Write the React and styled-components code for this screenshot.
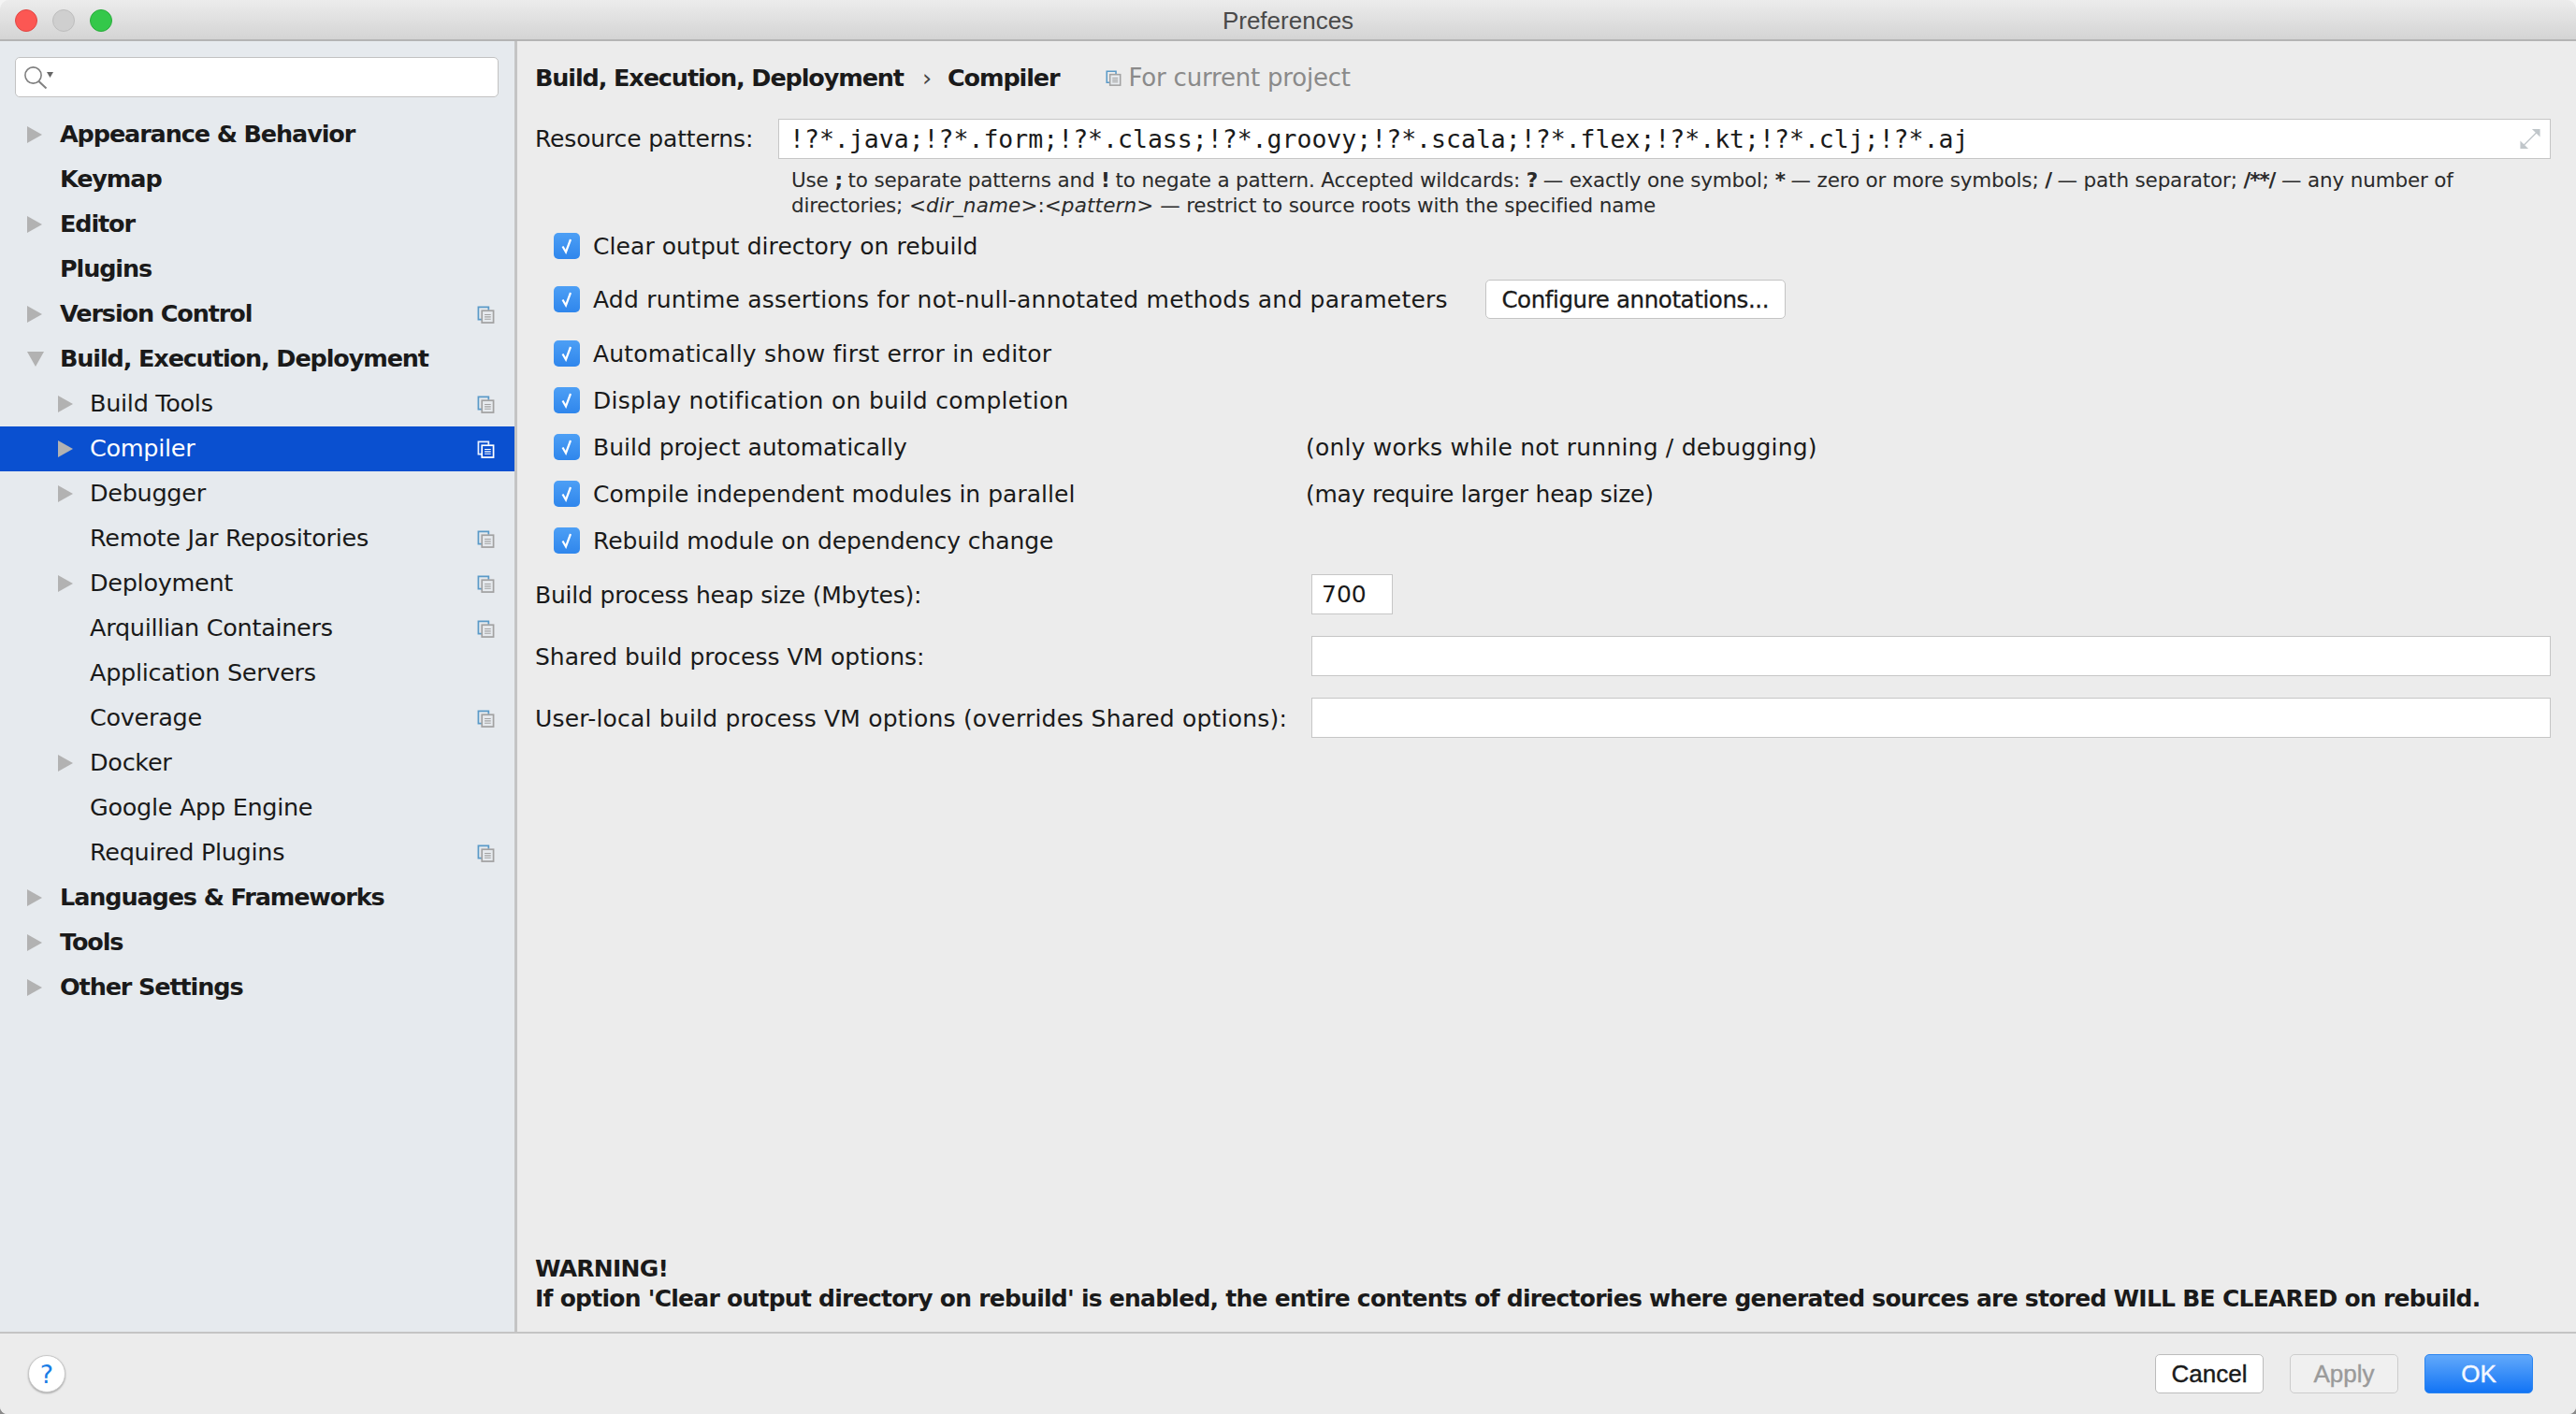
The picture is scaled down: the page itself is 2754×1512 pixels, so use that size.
import styled, { createGlobalStyle } from "styled-components";

const GlobalStyle = createGlobalStyle`
  html, body {
    margin: 0;
    padding: 0;
    background: linear-gradient(#f4f4f4 50%, #8a8a8a 50%);
  }
  * {
    box-sizing: border-box;
  }
`;

const treeItems = [
  { label: "Appearance & Behavior", top: true, arrow: "right" },
  { label: "Keymap", top: true },
  { label: "Editor", top: true, arrow: "right" },
  { label: "Plugins", top: true },
  { label: "Version Control", top: true, arrow: "right", copy: true },
  { label: "Build, Execution, Deployment", top: true, arrow: "down" },
  { label: "Build Tools", arrow: "right", copy: true },
  { label: "Compiler", arrow: "right", copy: true, selected: true },
  { label: "Debugger", arrow: "right" },
  { label: "Remote Jar Repositories", copy: true },
  { label: "Deployment", arrow: "right", copy: true },
  { label: "Arquillian Containers", copy: true },
  { label: "Application Servers" },
  { label: "Coverage", copy: true },
  { label: "Docker", arrow: "right" },
  { label: "Google App Engine" },
  { label: "Required Plugins", copy: true },
  { label: "Languages & Frameworks", top: true, arrow: "right" },
  { label: "Tools", top: true, arrow: "right" },
  { label: "Other Settings", top: true, arrow: "right" },
];

const CopyIcon = ({ light, size = 19 }) => (
  <svg width={size} height={size} viewBox="0 0 20 20" fill="none">
    <path d="M6 15.5H1.5V1.5H13V5" stroke={light ? "#e8f0ff" : "#5a9ac8"} strokeWidth="1.8" />
    <rect x="5.5" y="5.5" width="13" height="13.5" fill={light ? "none" : "#e6eaee"} stroke={light ? "#ffffff" : "#a2a2a2"} strokeWidth="1.8" />
    <path d="M8.5 10H15.5M8.5 12.5H15.5M8.5 15H15.5" stroke={light ? "#ffffff" : "#a2a2a2"} strokeWidth="1.3" />
  </svg>
);

const Arrow = ({ dir, nested }) => (
  <ArrowSlot $nested={nested}>
    {dir === "right" && (
      <svg width="16" height="18" viewBox="0 0 16 18">
        <path d="M0 0L16 9L0 18Z" fill="#b2b2b2" />
      </svg>
    )}
    {dir === "down" && (
      <svg width="18" height="16" viewBox="0 0 18 16">
        <path d="M0 0H18L9 16Z" fill="#b2b2b2" />
      </svg>
    )}
  </ArrowSlot>
);

const Check = () => (
  <CheckBox>
    <svg width="14" height="18" viewBox="0 0 14 18" fill="none">
      <path d="M2.5 9.5L6 15.5L11 2" stroke="#ffffff" strokeWidth="2.2" />
    </svg>
  </CheckBox>
);

const App = () => {
  return (
    <>
      <GlobalStyle />
      <Window>
        <TitleBar>
          <Lights>
            <Light $color="#fc5753" $edge="#df4744" />
            <Light $color="#cfcfcf" $edge="#bdbdbd" />
            <Light $color="#34c84a" $edge="#2aac3c" />
          </Lights>
          <TitleText>Preferences</TitleText>
        </TitleBar>
        <Body>
          <Sidebar>
            <SearchBox>
              <svg width="32" height="24" viewBox="0 0 32 24" fill="none">
                <circle cx="9.5" cy="9.5" r="8.6" stroke="#808080" strokeWidth="1.6" />
                <path d="M15.5 16L23.5 23.5" stroke="#808080" strokeWidth="2" />
                <path d="M24 6H31L27.5 12Z" fill="#666666" />
              </svg>
            </SearchBox>
            <Tree>
              {treeItems.map((item) => (
                <TreeRow key={item.label} $selected={item.selected}>
                  <Arrow dir={item.arrow} nested={!item.top} />
                  <TreeLabel $top={item.top}>{item.label}</TreeLabel>
                  {item.copy && (
                    <TreeIcon>
                      <CopyIcon light={item.selected} />
                    </TreeIcon>
                  )}
                </TreeRow>
              ))}
            </Tree>
          </Sidebar>
          <Main>
            <Crumbs>
              <strong>Build, Execution, Deployment</strong>
              <CrumbSep>›</CrumbSep>
              <strong>Compiler</strong>
              <ProjectNote>
                <CopyIcon size={17} />
                For current project
              </ProjectNote>
            </Crumbs>
            <PatternRow>
              <PatternLabel>Resource patterns:</PatternLabel>
              <PatternField>
                !?*.java;!?*.form;!?*.class;!?*.groovy;!?*.scala;!?*.flex;!?*.kt;!?*.clj;!?*.aj
                <ExpandIcon width="26" height="25" viewBox="0 0 26 26" fill="none">
                  <path d="M15 2H24V11Z" fill="#c0c6ca" />
                  <path d="M2 24V15L11 24Z" fill="#c0c6ca" />
                  <path d="M20 6L6 20" stroke="#c0c6ca" strokeWidth="1.5" />
                </ExpandIcon>
              </PatternField>
            </PatternRow>
            <Help>
              Use <b>;</b> to separate patterns and <b>!</b> to negate a pattern. Accepted wildcards: <b>?</b> — exactly one symbol; <b>*</b> — zero or more symbols; <b>/</b> — path separator; <b>/**/</b> — any number of
              <br />
              directories; <i>&lt;dir_name&gt;</i>:<i>&lt;pattern&gt;</i> — restrict to source roots with the specified name
            </Help>
            <CheckRow $height={48} $first $track={0.07}>
              <Check />
              Clear output directory on rebuild
            </CheckRow>
            <CheckRow $height={66} $track={0.21}>
              <Check />
              Add runtime assertions for not-null-annotated methods and parameters
              <ConfigureButton>Configure annotations...</ConfigureButton>
            </CheckRow>
            <CheckRow $height={50} $track={0.2}>
              <Check />
              Automatically show first error in editor
            </CheckRow>
            <CheckRow $height={50} $track={0.3}>
              <Check />
              Display notification on build completion
            </CheckRow>
            <CheckRow $height={50} $track={0.2}>
              <Check />
              <CheckText $track={0}>Build project automatically</CheckText>
              (only works while not running / debugging)
            </CheckRow>
            <CheckRow $height={50} $track={-0.25}>
              <Check />
              <CheckText $track={0.02}>Compile independent modules in parallel</CheckText>
              (may require larger heap size)
            </CheckRow>
            <CheckRow $height={50} $track={-0.1}>
              <Check />
              Rebuild module on dependency change
            </CheckRow>
            <OptionRow $top={11}>
              <OptionLabel $track={-0.2}>Build process heap size (Mbytes):</OptionLabel>
              <OptionField $width="87px">700</OptionField>
            </OptionRow>
            <OptionRow $top={23}>
              <OptionLabel $track={0}>Shared build process VM options:</OptionLabel>
              <OptionField />
            </OptionRow>
            <OptionRow $top={23}>
              <OptionLabel $track={0.2}>User-local build process VM options (overrides Shared options):</OptionLabel>
              <OptionField />
            </OptionRow>
            <Warning>
              WARNING!
              <br />
              If option 'Clear output directory on rebuild' is enabled, the entire contents of directories where generated sources are stored WILL BE CLEARED on rebuild.
            </Warning>
          </Main>
        </Body>
        <Footer>
          <HelpButton>?</HelpButton>
          <FooterButtons>
            <DialogButton>Cancel</DialogButton>
            <DialogButton $disabled>Apply</DialogButton>
            <DialogButton $primary>OK</DialogButton>
          </FooterButtons>
        </Footer>
      </Window>
    </>
  );
};

const Window = styled.div`
  width: 2754px;
  height: 1512px;
  display: flex;
  flex-direction: column;
  overflow: hidden;
  background: #ececec;
  border-radius: 10px 10px 8px 8px;
  color: #1a1a1a;
  font-family: "DejaVu Sans", sans-serif;
  font-size: 25px;
`;

const TitleBar = styled.div`
  position: relative;
  height: 44px;
  flex: none;
  display: flex;
  align-items: center;
  justify-content: center;
  background: linear-gradient(#ececec, #d4d4d4);
  border-bottom: 2px solid #b4b4b4;
  color: #4a4a4a;
  font-family: "Liberation Sans", sans-serif;
  font-size: 26px;
`;

const TitleText = styled.span`
  margin-top: 2px;
`;

const Lights = styled.div`
  position: absolute;
  left: 16px;
  top: 10px;
  display: flex;
  gap: 16px;
`;

const Light = styled.div`
  width: 24px;
  height: 24px;
  border-radius: 50%;
  background: ${(p) => p.$color};
  border: 1px solid ${(p) => p.$edge};
`;

const Body = styled.div`
  flex: 1;
  display: flex;
  min-height: 0;
`;

const Sidebar = styled.div`
  width: 553px;
  flex: none;
  background: #e6eaee;
  border-right: 3px solid #c4c4c4;
`;

const SearchBox = styled.div`
  height: 43px;
  margin: 17px 17px 16px 16px;
  padding: 9px 0 0 9px;
  background: #ffffff;
  border: 1px solid #c2c2c2;
  border-radius: 5px;
`;

const Tree = styled.div`
  display: flex;
  flex-direction: column;
`;

const TreeRow = styled.div`
  height: 48px;
  display: flex;
  align-items: center;
  padding-right: 21px;
  background: ${(p) => (p.$selected ? "#0a50d0" : "transparent")};
  color: ${(p) => (p.$selected ? "#ffffff" : "#1a1a1a")};
`;

const ArrowSlot = styled.div`
  flex: none;
  display: flex;
  align-items: center;
  width: ${(p) => (p.$nested ? "96px" : "64px")};
  padding-left: ${(p) => (p.$nested ? "62px" : "29px")};
`;

const TreeLabel = styled.div`
  flex: 1;
  padding-bottom: 2px;
  font-weight: ${(p) => (p.$top ? 700 : 400)};
  font-size: 25.5px;
  letter-spacing: ${(p) => (p.$top ? "-1.12px" : "-0.3px")};
  white-space: nowrap;
`;

const TreeIcon = styled.div`
  flex: none;
  display: flex;
`;

const Main = styled.div`
  flex: 1;
  min-width: 0;
  display: flex;
  flex-direction: column;
  padding: 0 27px 0 19px;
`;

const Crumbs = styled.div`
  height: 38px;
  margin-top: 19px;
  padding-top: 2px;
  display: flex;
  align-items: center;
  font-size: 25.5px;
  letter-spacing: -1.12px;
  white-space: nowrap;
`;

const CrumbSep = styled.span`
  margin: 0 18px 0 20px;
  color: #444444;
`;

const ProjectNote = styled.span`
  display: flex;
  align-items: center;
  gap: 7px;
  margin-left: 50px;
  color: #8a8a8a;
  font-size: 26px;
  letter-spacing: -0.2px;
`;

const PatternRow = styled.div`
  margin-top: 26px;
  display: flex;
  align-items: center;
  height: 43px;
`;

const PatternLabel = styled.div`
  width: 260px;
  flex: none;
  letter-spacing: -0.15px;
`;

const PatternField = styled.div`
  position: relative;
  flex: 1;
  height: 100%;
  display: flex;
  align-items: center;
  padding-left: 11px;
  background: #ffffff;
  border: 1px solid #c6c6c6;
  font-family: "DejaVu Sans Mono", monospace;
  font-size: 26.5px;
  white-space: nowrap;
`;

const ExpandIcon = styled.svg`
  position: absolute;
  right: 8px;
  top: 8px;
`;

const Help = styled.div`
  margin: 9px 0 0 274px;
  font-size: 21.5px;
  line-height: 27px;
  letter-spacing: -0.16px;
  color: #2a2a2a;
  white-space: nowrap;

  b {
    letter-spacing: -1.1px;
  }

  i {
    letter-spacing: 0.15px;
  }
`;

const CheckRow = styled.div`
  height: ${(p) => p.$height}px;
  margin-top: ${(p) => (p.$first ? "6px" : "0")};
  display: flex;
  align-items: center;
  padding-left: 20px;
  letter-spacing: ${(p) => p.$track}px;
  white-space: nowrap;
`;

const CheckBox = styled.div`
  width: 28px;
  height: 28px;
  flex: none;
  margin-right: 14px;
  display: flex;
  align-items: center;
  justify-content: center;
  background: linear-gradient(#4d9ff5, #2f86ec);
  border-radius: 5px;
`;

const CheckText = styled.span`
  width: 762px;
  flex: none;
  letter-spacing: ${(p) => p.$track}px;
`;

const ConfigureButton = styled.div`
  width: 321px;
  height: 42px;
  margin-left: 40px;
  display: flex;
  align-items: center;
  justify-content: center;
  background: #ffffff;
  border: 1px solid #c4c4c4;
  border-radius: 5px;
  font-size: 24.5px;
  letter-spacing: -0.4px;
  -webkit-text-stroke: 0.3px #1a1a1a;
`;

const OptionRow = styled.div`
  height: 43px;
  margin-top: ${(p) => p.$top}px;
  display: flex;
  align-items: center;
`;

const OptionLabel = styled.div`
  width: 830px;
  flex: none;
  padding-top: 2px;
  letter-spacing: ${(p) => p.$track}px;
  white-space: nowrap;
`;

const OptionField = styled.div`
  width: ${(p) => p.$width || "auto"};
  flex: ${(p) => (p.$width ? "none" : "1")};
  height: 100%;
  display: flex;
  align-items: center;
  padding-left: 10px;
  background: #ffffff;
  border: 1px solid #c6c6c6;
`;

const Warning = styled.div`
  margin-top: auto;
  margin-bottom: 19px;
  font-weight: 700;
  font-size: 25px;
  line-height: 32px;
  letter-spacing: -0.74px;
  white-space: nowrap;
`;

const Footer = styled.div`
  height: 88px;
  flex: none;
  display: flex;
  align-items: center;
  justify-content: space-between;
  padding: 0 46px 0 30px;
  background: #ececec;
  border-top: 2px solid #c4c4c4;
`;

const HelpButton = styled.div`
  width: 40px;
  height: 40px;
  display: flex;
  align-items: center;
  justify-content: center;
  background: #ffffff;
  border-radius: 50%;
  border: 1px solid #c8c8c8;
  box-shadow: 0 1px 2px rgba(0, 0, 0, 0.3);
  color: #1a7ee6;
  font-size: 27px;
`;

const FooterButtons = styled.div`
  display: flex;
  gap: 28px;
`;

const DialogButton = styled.div`
  width: 116px;
  height: 42px;
  display: flex;
  align-items: center;
  justify-content: center;
  border-radius: 5px;
  font-family: "Liberation Sans", sans-serif;
  font-size: 26px;
  -webkit-text-stroke: 0.4px currentColor;
  border: 1px solid ${(p) => (p.$primary ? "#2a84f0" : p.$disabled ? "#cccccc" : "#bcbcbc")};
  background: ${(p) =>
    p.$primary ? "linear-gradient(#62a9fb, #1274f5)" : p.$disabled ? "#f0f0f0" : "#ffffff"};
  color: ${(p) => (p.$primary ? "#f4f8ff" : p.$disabled ? "#9a9a9a" : "#1a1a1a")};
`;

export default App;
